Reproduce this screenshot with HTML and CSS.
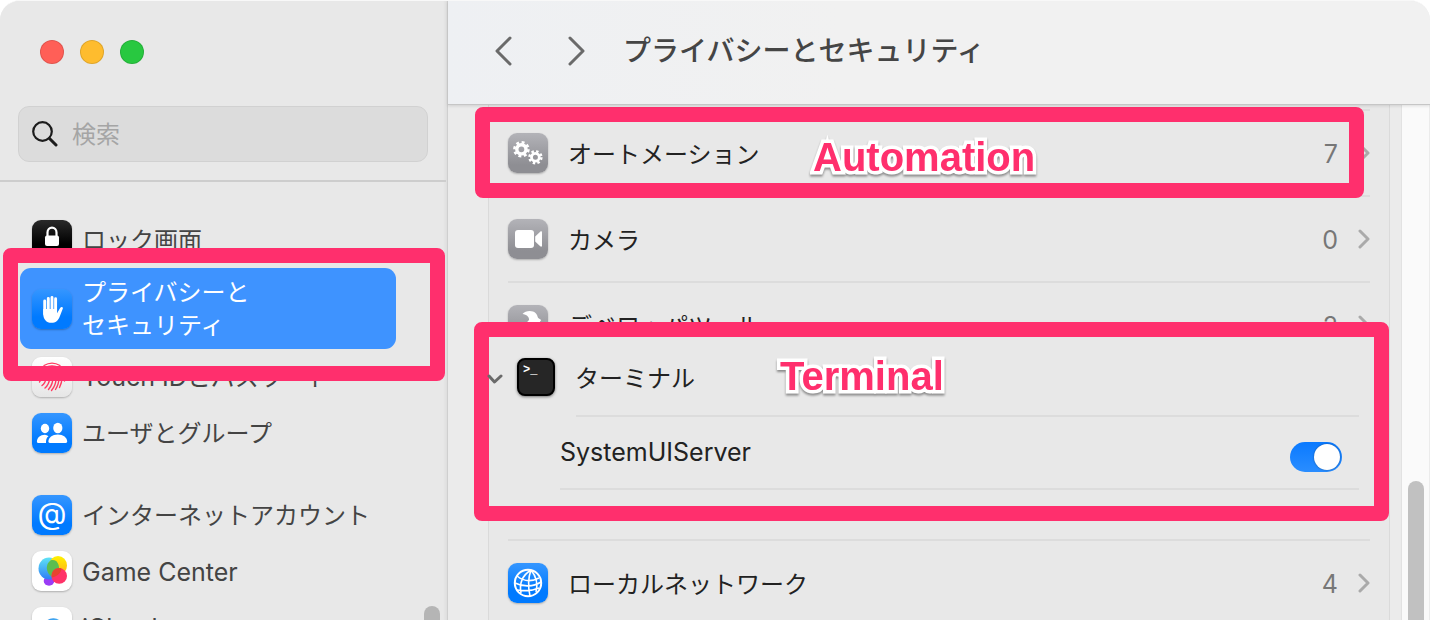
FILE: index.html
```
<!DOCTYPE html>
<html lang="ja">
<head>
  <meta charset="UTF-8">
  <title>プライバシーとセキュリティ</title>
  <link rel="stylesheet" href="styles.css">
</head>
<body>

<svg class="defs" aria-hidden="true">
  <defs>
    <linearGradient id="gcBlue" x1="0" y1="0" x2="0" y2="1"><stop offset="0" stop-color="#5fe3f5"/><stop offset="1" stop-color="#2f7df6"/></linearGradient>
    <linearGradient id="gcYellow" x1="0" y1="0" x2="0" y2="1"><stop offset="0" stop-color="#fff200"/><stop offset="1" stop-color="#ffae1a"/></linearGradient>
    <linearGradient id="cloudBlue" x1="0" y1="0" x2="1" y2="0"><stop offset="0" stop-color="#2386e8"/><stop offset="1" stop-color="#58bdf5"/></linearGradient>
    <symbol id="chevron" viewBox="0 0 12 20"><path d="M2 2l8 8-8 8" fill="none" stroke="currentColor" stroke-width="3" stroke-linecap="round" stroke-linejoin="round"/></symbol>
  </defs>
</svg>

<div class="window">
  <aside class="sidebar">
    <div class="lights">
      <button class="light red" aria-label="閉じる"></button>
      <button class="light yellow" aria-label="しまう"></button>
      <button class="light green" aria-label="拡大"></button>
    </div>

    <label class="search">
      <svg width="26" height="26" viewBox="0 0 26 26" fill="none" stroke="#1c1c1c" stroke-linecap="round"><circle cx="10.500" cy="10.500" r="9.300" stroke-width="2.200"/><path d="M17.500 17.500l6.500 6.500" stroke-width="3"/></svg>
      <input type="search" placeholder="検索" aria-label="検索">
    </label>

    <nav class="menu">
      <a href="#lock" class="item">
        <span class="icon black"><svg viewBox="0 0 40 40"><path d="M15.500 17v-4.500a4.500 4.800 0 0 1 9 0V17" fill="none" stroke="#fff" stroke-width="2.200"/><rect x="13" y="15.500" width="14" height="10.500" rx="2" fill="#fff"/></svg></span>
        <span>ロック画面</span>
      </a>
      <a href="#privacy" class="item selected">
        <span class="icon blue"><svg viewBox="0 0 40 40"><g stroke="#fff" stroke-width="2.900" stroke-linecap="round" fill="none"><path d="M12.700 12v13M16.300 9.500V22M20 8.400V22M23.600 9.800V23"/></g><path d="M11.250 20h13.800v4.200l3.100-5.300c1-1.700 3.100-1.100 2.700.7l-3 7.600c-1.400 4.300-4.400 6.600-8.300 6.600-5.300 0-8.300-3.600-8.300-8.800z" fill="#fff"/></svg></span>
        <span>プライバシーと<br>セキュリティ</span>
        <span class="frame"></span>
      </a>
      <a href="#touchid" class="item">
        <span class="icon pale"><svg viewBox="0 0 40 40" fill="none" stroke="#ff3b60" stroke-width="1.400" stroke-linecap="round"><path d="M12 8.500c5-3 11-3 16 0M8.500 15c5-8 18-8 23 0M7.500 21c0-14 25-14 25-1v4M7.500 25c5-5-1-13 12.500-13.500 7 0 10 4 10 9 0 4-1 7-2.500 10M10 28.500c7-5 2-14 10-14 5 0 7 3 7 6 0 5-1 8-3.500 12M13 31c7-6 3-13 7-13.500 3 0 4 2 4 4 0 5-2 9-4.500 12M16.500 32.500c3.500-4 4.500-8 4-12"/></svg></span>
        <span><span class="latin">Touch ID</span>とパスワード</span>
      </a>
      <a href="#users" class="item">
        <span class="icon blue"><svg viewBox="0 0 40 40" fill="#fff"><ellipse cx="13" cy="15.500" rx="4.200" ry="4.700"/><path d="M16.500 23.200c-2.400 1.700-2.500 3.800-2.500 6.800H6.200c-1 0-1.300-.5-1.300-1.200 0-4 3.300-7.100 8-7.100 1.300 0 2.500.5 3.600 1.500z"/><ellipse cx="25.800" cy="15" rx="4.600" ry="5.200"/><path d="M16.400 28.600c0-3.700 3.900-7 9.400-7s9.400 3.300 9.400 7c0 .9-.5 1.400-1.500 1.400H17.900c-1 0-1.500-.5-1.500-1.400z"/></svg></span>
        <span>ユーザとグループ</span>
      </a>
      <a href="#accounts" class="item group">
        <span class="icon blue"><svg viewBox="0 0 40 40"><text x="20" y="29" class="at">@</text></svg></span>
        <span>インターネットアカウント</span>
      </a>
      <a href="#gamecenter" class="item">
        <span class="icon white"><svg viewBox="0 0 40 40"><ellipse cx="17" cy="30" rx="5.300" ry="4.700" fill="#9a3cf5"/><ellipse cx="17" cy="17.500" rx="10.500" ry="11" fill="url(#gcBlue)"/><ellipse cx="26" cy="14.500" rx="9" ry="9.500" fill="url(#gcYellow)"/><path d="M24.500 10.200a10.500 11 0 0 1-1.800 16.200 9 9.500 0 0 1-4.200-17c2-.9 4-.4 6 .8z" fill="#5bbd50"/><ellipse cx="27.200" cy="25" rx="7.800" ry="7.800" fill="#ff3268"/><path d="M20 21.800c2-4.200 6.200-5.300 9.500-4.400-.4 4.500-4 7.800-9.700 9z" fill="#e8442f"/></svg></span>
        <span class="latin">Game Center</span>
      </a>
      <a href="#icloud" class="item">
        <span class="icon white"><svg viewBox="0 0 40 40"><path d="M10 29a6 6 0 0 1 3-13 9.500 9.500 0 0 1 17 1 6 6 0 0 1 0 12z" fill="url(#cloudBlue)"/></svg></span>
        <span class="latin">iCloud</span>
      </a>
    </nav>
    <div class="thumb"></div>
  </aside>

  <main class="main">
    <header class="toolbar">
      <button class="nav back" aria-label="戻る"><svg width="20" height="30" viewBox="0 0 20 30"><path d="M17 2L4 15l13 13"/></svg></button>
      <button class="nav" aria-label="進む"><svg width="20" height="30" viewBox="0 0 20 30"><path d="M3 2l13 13L3 28"/></svg></button>
      <h1>プライバシーとセキュリティ</h1>
    </header>

    <div class="content">
      <ul class="list">
        <li>
          <a href="#automation" class="row">
            <span class="icon gray"><svg viewBox="0 0 40 40" fill="none" stroke="#fff"><circle cx="13.400" cy="16.300" r="4.600" stroke-width="3.400"/><circle cx="13.400" cy="16.300" r="7" stroke-width="2.600" stroke-dasharray="2.900 2.600"/><circle cx="27.400" cy="24.300" r="3.900" stroke-width="2.800"/><circle cx="27.400" cy="24.300" r="6" stroke-width="2.400" stroke-dasharray="2.450 2.260"/></svg></span>
            <span class="name">オートメーション</span>
            <span class="count">7</span>
            <svg class="arrow"><use href="#chevron"/></svg>
          </a>
          <span class="frame"></span>
          <strong class="callout">Automation</strong>
        </li>
        <li>
          <a href="#camera" class="row">
            <span class="icon gray"><svg viewBox="0 0 40 40" fill="#fff"><rect x="7" y="11" width="19" height="18" rx="3"/><path d="M27.200 17.500l5-4.800c1-.9 1.800-.5 1.800.7v13.200c0 1.200-.8 1.600-1.800.7l-5-4.800z"/></svg></span>
            <span class="name">カメラ</span>
            <span class="count">0</span>
            <svg class="arrow"><use href="#chevron"/></svg>
          </a>
        </li>
        <li>
          <a href="#devtools" class="row">
            <span class="icon gray"><svg viewBox="0 0 40 40" fill="#fff"><path d="M14.500 9c3-3.500 10-4 13.500-.5 1.500 1.500 1.300 3 2.200 4.500l3 2-3.500 5-4-2L12 34l-5-4 14-15c.5-3-2.500-5.500-6.500-6z"/></svg></span>
            <span class="name">デベロッパツール</span>
            <span class="count">2</span>
            <svg class="arrow"><use href="#chevron"/></svg>
          </a>
        </li>
        <li class="expanded">
          <section class="inset">
            <div class="app">
              <svg class="open" width="16" height="14" viewBox="0 0 16 14"><path d="M2 6l5.500 6L14 6"/></svg>
              <span class="terminal-icon"><svg viewBox="0 0 34 34"><text x="4" y="13" class="prompt">&gt;_</text></svg></span>
              <span class="name">ターミナル</span>
            </div>
            <div class="service">
              <label for="uiserver" class="latin">SystemUIServer</label>
              <input type="checkbox" id="uiserver" class="switch" checked>
            </div>
            <strong class="callout">Terminal</strong>
          </section>
        </li>
        <li>
          <a href="#localnetwork" class="row">
            <span class="icon blue"><svg viewBox="0 0 40 40" fill="none" stroke="#fff" stroke-width="1.600"><circle cx="20" cy="20" r="13.200" stroke-width="2"/><path d="M23 7c-8 5-12 13-10 23M23 7c-3 8-3 17-1 26M23 7c5 6 7 14 5 22M9 13c6 5 14 6 22 2M7 20c8 4 18 4 26-1M9 27c7 1 15 1 22-2"/></svg></span>
            <span class="name">ローカルネットワーク</span>
            <span class="count">4</span>
            <svg class="arrow"><use href="#chevron"/></svg>
          </a>
        </li>
      </ul>
      <div class="track"><div class="thumb"></div></div>
    </div>
  </main>
</div>

</body>
</html>
```
FILE: styles.css
```
* {
  box-sizing: border-box;
}

body {
  margin: 0;
  background: #fff;
  font-family: Inter, "Noto Sans CJK JP", sans-serif;
  font-size: 24px;
  color: #222;
}

a {
  color: inherit;
  text-decoration: none;
}

button {
  padding: 0;
  border: none;
  background: none;
}

svg {
  display: block;
}

.defs {
  position: absolute;
  width: 0;
  height: 0;
}

.window {
  display: flex;
  height: 100vh;
  border-radius: 20px 20px 0 0;
  border-top: 1px solid #f8f8f8;
  overflow: hidden;
  background: #e8e8e8;
}

.latin {
  font-size: 25px;
}

/* sidebar */
.sidebar {
  position: relative;
  display: flex;
  flex-direction: column;
  flex: 0 0 448px;
  min-width: 0;
  border-right: 1px solid #cfcfcf;
  background: linear-gradient(to left, #dedede, #e8e8e8 4px);
}

.lights {
  display: flex;
  gap: 16px;
  padding: 39px 40px 42px;
}

.light {
  width: 24px;
  height: 24px;
  border-radius: 50%;
  border: 1px solid rgba(0, 0, 0, 0.12);
}

.red { background: #ff5f57; }
.yellow { background: #febc2e; }
.green { background: #28c840; }

.search {
  display: flex;
  align-items: center;
  gap: 14px;
  height: 56px;
  margin: 0 19px 18px 18px;
  padding: 0 13px;
  background: #dcdcdc;
  border: 1px solid #d1d1d1;
  border-radius: 11px;
}

.search input {
  flex: 1;
  min-width: 0;
  padding: 0;
  border: none;
  outline: none;
  background: none;
  font: inherit;
}

.search input::placeholder {
  color: #a5a5a5;
}

.menu {
  flex: 1;
  min-height: 0;
  padding: 30px 0 0 20px;
  border-top: 2px solid #cdcdcd;
  margin-right: 1px;
}

.item {
  position: relative;
  display: flex;
  align-items: center;
  gap: 10px;
  width: 376px;
  height: 56px;
  padding: 0 12px;
  line-height: 33px;
  color: #444;
}

.item > .latin {
  padding-top: 2px;
}

.item.group {
  margin-top: 26px;
}

.item.selected {
  z-index: 1;
  height: 81px;
  border-radius: 11px;
  background: #3e93ff;
  color: #fff;
}

.icon {
  flex: none;
  width: 40px;
  height: 40px;
  border-radius: 9px;
  box-shadow: 0 1px 2px rgba(0, 0, 0, 0.25);
}

.blue { background: linear-gradient(#3596ff, #007aff 70%); }
.gray { background: linear-gradient(#b3b3b8, #8e8e93 80%); }
.black { background: linear-gradient(#2a2a2a, #000 60%); }
.pale { background: linear-gradient(#fff, #e6e6e6); }
.white { background: #fff; }

.at {
  font: 30px Inter, sans-serif;
  fill: #fff;
  text-anchor: middle;
}

.thumb {
  width: 16px;
  border-radius: 8px 8px 0 0;
  background: #b5b5b5;
}

.sidebar .thumb {
  position: absolute;
  right: 7px;
  top: 605px;
  bottom: 0;
}

/* right side */
.main {
  display: flex;
  flex-direction: column;
  flex: 1;
  min-width: 0;
}

.toolbar {
  position: relative;
  z-index: 2;
  display: flex;
  align-items: center;
  flex: none;
  height: 104px;
  padding: 0 45px 3px;
  border-bottom: 1px solid #c6c6c6;
  background: linear-gradient(to right, #eef0f3, #f1f1f1 40%);
  box-shadow: 0 1px 3px rgba(0, 0, 0, 0.12);
}

.nav {
  width: 20px;
  height: 30px;
  margin-right: 36px;
}

.nav.back {
  margin-right: 54px;
}

.nav path,
.open path {
  fill: none;
  stroke: #6a6a6a;
  stroke-width: 3;
  stroke-linecap: round;
  stroke-linejoin: round;
}

h1 {
  margin: 0;
  font-size: 28px;
  font-weight: 500;
  line-height: 40px;
  color: #454545;
  white-space: nowrap;
}

.content {
  display: flex;
  flex: 1;
  min-height: 0;
  padding: 0 1px 0 40px;
  background: #ebebeb;
  overflow: hidden;
}

.list {
  flex: 1;
  align-self: flex-start;
  margin: 0 11px 0 0;
  padding: 4px 19px 0;
  border: solid #dadada;
  border-width: 0 1px;
  background: #e8e8e8;
  list-style: none;
}

.list li {
  position: relative;
  border-top: 2px solid #dcdcdc;
}

.row {
  display: flex;
  align-items: center;
  height: 84px;
}

.name {
  flex: 1;
  margin-left: 20px;
  padding-bottom: 2px;
}

.count {
  padding-top: 2px;
  font-size: 25px;
  color: #777;
}

.arrow {
  width: 12px;
  height: 20px;
  margin-left: 20px;
  color: #aaa;
}

.list li.expanded {
  height: 172px;
}

.track {
  display: flex;
  justify-content: center;
  align-items: flex-end;
  width: 28px;
  border-left: 1px solid #e2e2e2;
  background: #fafafa;
}

.track .thumb {
  height: 139px;
  background: #c1c1c1;
}

/* markup on top of the window */
.frame,
.inset,
.callout {
  position: absolute;
  z-index: 1;
}

.frame,
.inset {
  border: 15px solid #ff2f6d;
  border-radius: 8px;
}

.frame {
  pointer-events: none;
}

.item .frame {
  inset: -20px -49px -32px -17px;
}

.list .frame {
  inset: -4px 6px -3px -33px;
}

.inset {
  inset: -47px -19px 18px -34px;
  background: #e8e8e8;
}

.app {
  display: flex;
  align-items: center;
  height: 78px;
  padding: 2px 0 0 28px;
}

.open {
  position: absolute;
  left: -2px;
}

.terminal-icon {
  width: 38px;
  height: 38px;
  border: 2px solid #000;
  border-radius: 8px;
  background: #262626;
  box-shadow: 0 1px 3px rgba(0, 0, 0, 0.5);
}

.prompt {
  font: bold 12px "Liberation Mono", monospace;
  fill: #fff;
}

.service {
  display: flex;
  align-items: center;
  justify-content: space-between;
  height: 75px;
  margin: 0 15px 0 71px;
  padding-right: 17px;
  border-bottom: 2px solid #dcdcdc;
  background: linear-gradient(#dcdcdc, #dcdcdc) 16px 0 / 100% 2px no-repeat;
}

.switch {
  appearance: none;
  width: 52px;
  height: 30px;
  margin: 10px 0 0;
  padding: 2px;
  border-radius: 15px;
  background: linear-gradient(#0a7aff, #2a8dff);
}

.switch::before {
  content: "";
  display: block;
  width: 26px;
  height: 26px;
  border-radius: 50%;
  background: #fff;
  box-shadow: 0 0 2px rgba(0, 0, 0, 0.4);
}

.switch:checked::before {
  margin-left: auto;
}

.callout {
  top: 22px;
  left: 305px;
  font: bold 40px/48px "Liberation Sans", sans-serif;
  color: #ff2f6d;
  -webkit-text-stroke: 7px #fff;
  paint-order: stroke fill;
  stroke-linejoin: round;
  filter: drop-shadow(0 2px 1px rgba(0, 0, 0, 0.4));
}

.inset .callout {
  top: 15px;
  left: 291px;
}
```
